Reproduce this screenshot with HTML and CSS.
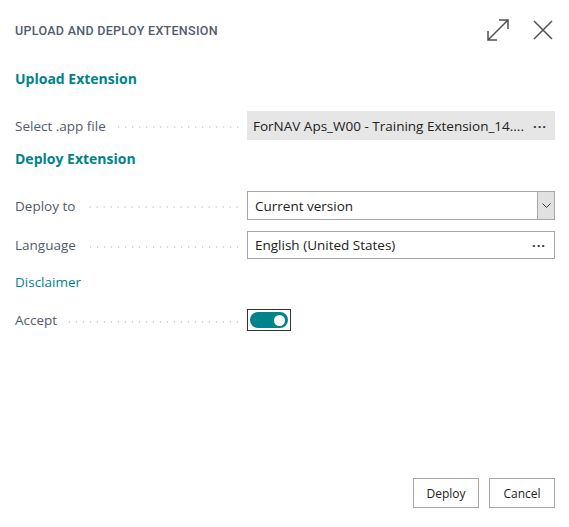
FILE: index.html
```html
<!DOCTYPE html>
<html>
<head>
<meta charset="utf-8">
<link rel="stylesheet" href="styles.css">
</head>
<body>
<div class="dialog">
  <div class="header">
    <div class="title">UPLOAD AND DEPLOY EXTENSION</div>
    <div class="actions">
      <svg class="icon" width="24" height="24" viewBox="0 0 24 24"><path d="M2 22 L22 2 M13 2 H22 V11 M2 13 V22 H11" fill="none" stroke="#505050" stroke-width="1.5"/></svg>
      <svg class="icon" width="22" height="22" viewBox="0 0 22 22"><path d="M2 2 L20 20 M20 2 L2 20" fill="none" stroke="#505050" stroke-width="1.5"/></svg>
    </div>
  </div>
  <div class="section">Upload Extension</div>
  <div class="row first">
    <div class="label"><span>Select .app file</span><i class="dots"></i></div>
    <div class="field readonly"><span class="val">ForNAV Aps_W00 - Training Extension_14....</span><span class="more">···</span></div>
  </div>
  <div class="section s2">Deploy Extension</div>
  <div class="row first2">
    <div class="label"><span>Deploy to</span><i class="dots"></i></div>
    <div class="field box select"><span class="val">Current version</span><span class="arrow"><svg width="9" height="6" viewBox="0 0 9 6"><path d="M0.5 0.5 L4.5 4.5 L8.5 0.5" fill="none" stroke="#333" stroke-width="1"/></svg></span></div>
  </div>
  <div class="row">
    <div class="label"><span>Language</span><i class="dots"></i></div>
    <div class="field box"><span class="val">English (United States)</span><span class="more">···</span></div>
  </div>
  <div class="link">Disclaimer</div>
  <div class="row accept">
    <div class="label"><span>Accept</span><i class="dots"></i></div>
    <div class="toggle"><div class="pill"><div class="knob"></div></div></div>
  </div>
  <div class="spacer"></div>
  <div class="footer">
    <button class="btn">Deploy</button>
    <button class="btn">Cancel</button>
  </div>
</div>
</body>
</html>
```
FILE: styles.css
```css
html, body { margin: 0; padding: 0; background: #fff; }
body { font-family: "Open Sans", "Noto Sans", sans-serif; color: #333; width: 569px; height: 527px; overflow: hidden; }
.dialog { display: flex; flex-direction: column; height: 527px; padding: 0 14px 0 15px; box-sizing: border-box; }
.header { display: flex; align-items: center; justify-content: space-between; height: 60px; }
.title { font-family: "Roboto", sans-serif; font-weight: 500; font-size: 12.5px; color: #505c6d; letter-spacing: 0.3px; }
.actions { display: flex; gap: 22px; align-items: center; margin-right: 1px; }
.section { font-size: 14px; font-weight: 700; color: #00838a; margin-top: 9px; height: 20px; line-height: 20px; }
.s2 { margin-top: 9px; }
.row { display: flex; align-items: center; height: 28px; margin-top: 11px; }
.row.first { margin-top: 22px; height: 29px; }
.row.first2 { margin-top: 22px; height: 29px; }
.row.accept { margin-top: 17px; height: 22px; }
.label { flex: none; width: 232px; display: flex; align-items: center; font-size: 13.5px; color: #505c6d; }
.label span { white-space: nowrap; }
.dots { flex: 1; height: 2px; margin: 3px 6px 0 10px; background-image: radial-gradient(circle, #cfcfcf 0.9px, transparent 1.1px); background-size: 7px 2px; background-repeat: repeat-x; background-position: right center; }
.field { flex: 1; min-width: 0; height: 100%; display: flex; align-items: center; box-sizing: border-box; font-size: 13.5px; color: #212121; }
.readonly { background: #e6e6e6; padding-left: 6px; }
.box { border: 1px solid #a6a6a6; padding-left: 7px; }
.val { flex: 1; white-space: nowrap; overflow: hidden; }
.more { width: 30px; text-align: center; letter-spacing: 1px; font-size: 13px; font-weight: 700; color: #333; }
.select .arrow { width: 16px; height: 100%; background: #e1e1e1; border-left: 1px solid #a6a6a6; display: flex; align-items: center; justify-content: center; }
.link { font-size: 13.5px; color: #00838a; margin-top: 13px; height: 20px; line-height: 20px; }
.toggle { width: 44px; height: 22px; border: 1px solid #333; box-sizing: border-box; display: flex; align-items: center; justify-content: center; }
.pill { width: 38px; height: 16px; border-radius: 8px; background: #00838a; display: flex; align-items: center; justify-content: flex-end; padding-right: 3px; box-sizing: border-box; }
.knob { width: 11px; height: 11px; border-radius: 50%; background: #fff; }
.spacer { flex: 1; }
.footer { display: flex; justify-content: flex-end; gap: 10px; margin-bottom: 19px; }
.btn { width: 66px; height: 30px; background: #fff; border: 1px solid #a6a6a6; font-family: "Open Sans", "Noto Sans", sans-serif; font-size: 12px; color: #212121; padding: 0; }
```
